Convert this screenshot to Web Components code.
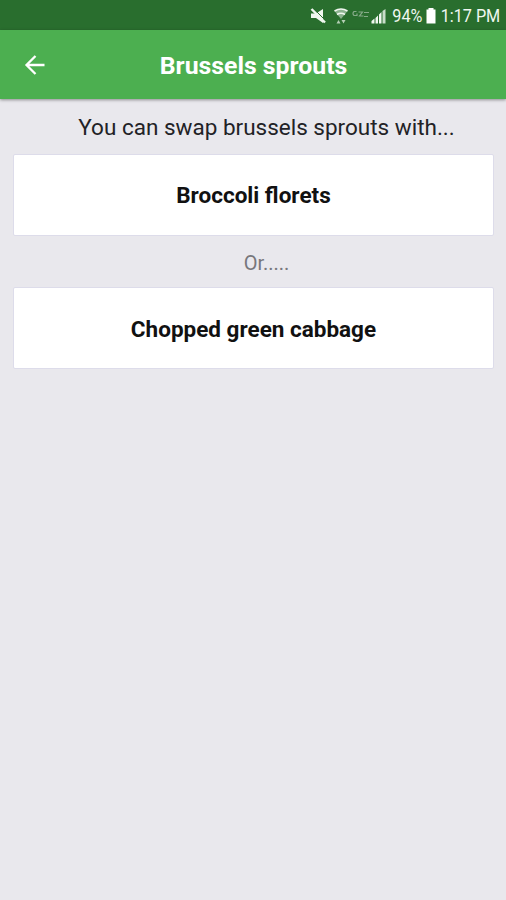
<!DOCTYPE html>
<html lang="en">
<head>
  <meta charset="utf-8">
  <meta name="viewport" content="width=device-width, initial-scale=1">
  <title>Brussels sprouts</title>
  <style>
    body {
      margin: 0;
      font-family: Roboto, sans-serif;
      background: #e9e8ed;
    }
  </style>
</head>
<body>
  <swap-screen></swap-screen>

  <script>
    class StatusBar extends HTMLElement {
      constructor() {
        super();

        this.attachShadow({ mode: 'open' });

        this.shadowRoot.innerHTML = `
          <style>
            :host {
              display: flex;
              align-items: center;
              justify-content: flex-end;
              box-sizing: border-box;
              height: 30px;
              padding: 2px 6px 0 0;
              background: #296e2e;
              color: #f0f7f0;
              font-size: 18px;
              line-height: 28px;
              white-space: nowrap;
            }

            svg {
              flex: none;
              width: 80px;
              height: 24px;
              margin-right: 4px;
            }

            .battery {
              width: 10px;
              height: 16px;
              margin: 0 5px 0 3px;
            }

            /* the status bar uses a slightly condensed face */
            .level,
            .time {
              display: block;
              transform: scaleX(0.9);
              transform-origin: right;
            }

            .level {
              margin-left: -3px;
            }

            .time {
              margin-left: -7px;
            }
          </style>
          <svg viewBox="308 3 80 24" fill="#f0f7f0">
            <!-- muted speaker -->
            <path d="M311 12.500h5l7-4.500v14l-7-5h-5z"/>
            <path d="M314 8l12 12" stroke="#296e2e" stroke-width="1"/>
            <path d="M311.500 8l13.500 13.500" stroke="#f0f7f0" stroke-width="2.400"/>
            <!-- wifi -->
            <path d="M334.500 10q6.500-4 13 0l-6.500 8z" opacity=".5"/>
            <path d="M334.500 10q6.500-4 13 0M337 13.500q4-2.500 8 0" fill="none" stroke="#f0f7f0" stroke-width="1.600"/>
            <path d="M338.500 19l2 3.500h-4zM343.500 22.500l-2-3.500h4z" opacity=".7"/>
            <!-- carrier badge -->
            <path d="M356.500 10.500h-2.500q-2 2 0 4h3v-2M358.500 11h4l-3 4h4M364 11.500h5M364 15.500h4" fill="none" stroke="#86aa88" stroke-width="1.200"/>
            <!-- signal -->
            <path d="M371.500 20l3-2.500V22.500h-3zM375.500 17l2.500-2.500v8h-2.500zM379 13.500l2.500-2.500v11.500H379z"/>
            <path d="M382.500 10l3-2v14.500h-3z" opacity=".8"/>
          </svg>
          <span class="level">94%</span>
          <svg class="battery" viewBox="0 0 10 16" fill="#fff">
            <path d="M2.500 0h5v1.500h2v14h-9v-14h2z"/>
          </svg>
          <span class="time">1:17 PM</span>
        `;
      }
    }
    customElements.define('status-bar', StatusBar);

    class AppHeader extends HTMLElement {
      constructor() {
        super();

        this.attachShadow({ mode: 'open' });

        this.shadowRoot.innerHTML = `
          <style>
            :host {
              display: grid;
              grid-template-columns: 70px 1fr 70px;
              align-items: center;
              box-sizing: border-box;
              height: 69px;
              padding-top: 2px;
              background: #4caf50;
              box-shadow: 0 1px 3px rgba(0, 0, 0, 0.4);
              color: #fff;
            }

            button {
              display: flex;
              width: 24px;
              height: 24px;
              margin: -2px 0 0 23px;
              padding: 0;
              border: 0;
              background: none;
            }

            h1 {
              margin: 0;
              padding-left: 1px;
              font-size: 24.800px;
              font-weight: 700;
              line-height: 32px;
              text-align: center;
              white-space: nowrap;
            }
          </style>
          <button aria-label="Back">
            <svg width="24" height="24" viewBox="0 0 24 24" fill="none" stroke="#fff" stroke-width="2.300">
              <path d="M21.500 12H4M12.500 3L3.500 12l9 9"/>
            </svg>
          </button>
          <h1><slot></slot></h1>
        `;
      }
    }
    customElements.define('app-header', AppHeader);

    class SwapOption extends HTMLElement {
      constructor() {
        super();

        this.attachShadow({ mode: 'open' });

        this.shadowRoot.innerHTML = `
          <style>
            :host {
              display: flex;
              align-items: center;
              justify-content: center;
              box-sizing: border-box;
              height: 82px;
              border: 1px solid #dddcea;
              border-radius: 2px;
              background: #fff;
              color: #111;
              font-size: 22.500px;
              font-weight: 700;
              white-space: nowrap;
            }
          </style>
          <span><slot></slot></span>
        `;
      }
    }
    customElements.define('swap-option', SwapOption);

    class SwapScreen extends HTMLElement {
      constructor() {
        super();

        this.attachShadow({ mode: 'open' });

        this.shadowRoot.innerHTML = `
          <style>
            :host {
              display: flex;
              flex-direction: column;
              height: 900px;
              background: #e9e8ed;
            }

            main {
              padding: 0 12px 0 13px;
            }

            p {
              margin: 0;
              padding-left: 26px;
              text-align: center;
              white-space: nowrap;
            }

            .intro {
              height: 55px;
              color: #222226;
              font-size: 22.500px;
              line-height: 57px;
            }

            .or {
              height: 51px;
              color: #77777c;
              font-size: 20px;
              line-height: 54px;
            }

            .or + swap-option {
              padding-top: 2px;
            }
          </style>
          <status-bar></status-bar>
          <app-header>Brussels sprouts</app-header>
          <main>
            <p class="intro">You can swap brussels sprouts with...</p>
            <swap-option>Broccoli florets</swap-option>
            <p class="or">Or.....</p>
            <swap-option>Chopped green cabbage</swap-option>
          </main>
        `;
      }
    }
    customElements.define('swap-screen', SwapScreen);
  </script>
</body>
</html>
